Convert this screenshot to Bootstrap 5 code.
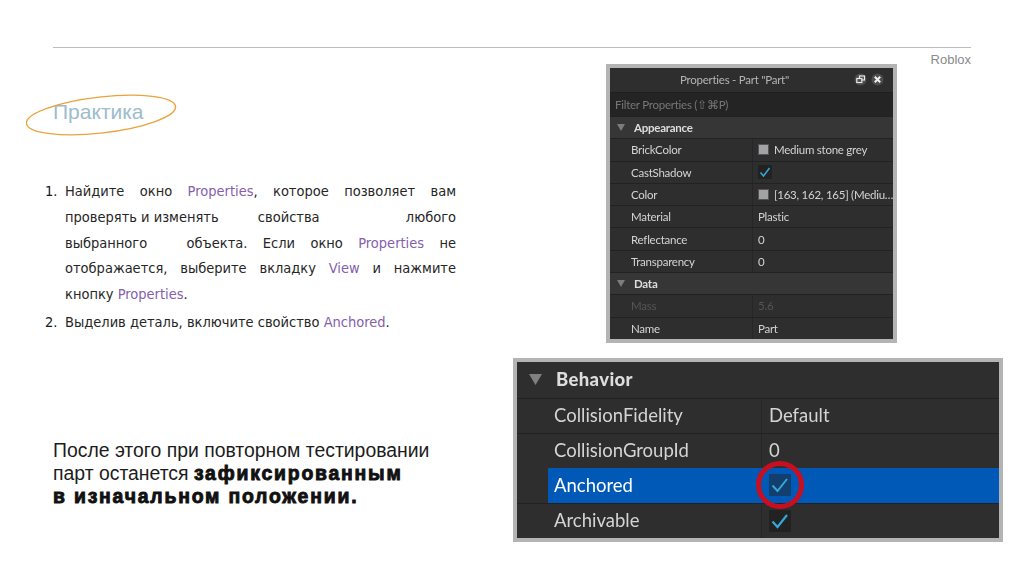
<!DOCTYPE html>
<html lang="ru">
<head>
<meta charset="utf-8">
<title>Практика</title>
<link href="https://cdn.jsdelivr.net/npm/bootstrap@5.3.0/dist/css/bootstrap.min.css" rel="stylesheet">
<style>
html,body{height:574px;overflow:hidden;background:#fff}
.slide{height:574px;padding-top:47px}
.rule{height:1px;background:#bdbdbd;margin:0 53px}
.leftcol{width:513px;flex:none}
.rightcol{width:490px;flex:none}
.heading-wrap{padding-left:53px;margin-top:38px;height:50px}
.practice{font:21px/1 "Liberation Sans",sans-serif;color:#9dbccc;padding-top:15px}
.ring{position:absolute;left:-27px;top:6px}
.steps{padding-left:45px;margin-top:43px;font:14.5px/25.8px "DejaVu Sans Condensed","DejaVu Sans",sans-serif;color:#262626;width:456px}
.stepnum{width:20px;flex:none;color:#1a1a1a}
.stepline{text-align:justify;text-align-last:justify;white-space:nowrap}
.stepline.free{text-align-last:left}
.hl{color:#8560ab}
.g2{margin-right:47px}
.g3{margin-right:24px}
.secondstep{margin-top:2px}
.after{font:19.4px/23px "Liberation Sans",sans-serif;color:#1c1c1c;padding-left:53px;margin-top:103px}
.heavy{font-weight:700;color:#111;letter-spacing:1.8px;-webkit-text-stroke:.9px #111}
.robloxtag{font:13px/1 "Liberation Sans",sans-serif;color:#8a8a8a;padding:5px 32px 0 0}
.toprow{padding-left:93px}
.panel{background:#2e2e2e;border:4px solid #b4b4b4;color:#d4d4d4;font-family:Lato,"Noto Sans",sans-serif;filter:blur(.35px)}
.smallp{width:291px;margin-top:16px;font-size:11.5px;letter-spacing:-.25px}
.smallp .titlebar{height:24px;background:#2e2e2e;color:#b5b5b5;position:relative;padding-right:34px}
.winbtns{position:absolute;right:4px;top:4px}
.filterbar{height:24px;background:#242424;color:#777;padding-left:5px;border-top:1px solid #1f1f1f}
.prow{height:22.3px;border-top:1px solid #222}
.prow .lbl{width:143px;padding-left:21px;flex:none;border-right:1px solid #262626;height:100%;display:flex;align-items:center}
.prow .val{padding-left:5px;display:flex;align-items:center;gap:5px;height:100%;white-space:nowrap}
.grouprow{background:#363636;font-weight:700;color:#ddd;padding-left:7px;gap:9px}
.mutedrow{color:#555}
.swatch{width:11px;height:11px;background:#a3a2a5;border:1px solid #555;flex:none}
.bigp{margin-top:15px;font-size:18.5px;height:184px}
.bigp .prow{height:35px}
.bigp .lbl{width:245px;padding-left:37px}
.bigp .val{padding-left:7px}
.bigp .grouprow{background:#2e2e2e;font-size:18.5px;font-weight:900;letter-spacing:.35px;padding-left:12px;gap:14px;height:36px;border-top:0}
.bigp .selrow{position:relative;border-top:0}
.selrow .lbl{color:#fff;border-right:0;padding-left:0;margin-left:31px;width:214px;background:#0058b7}
.selrow .val{background:#0058b7;flex:1}
.sellabel{padding-left:6px}
.cbox{display:block;flex:none}
.redring{position:absolute;left:239px;top:-7px}
</style>
</head>
<body>
<div class="slide">
  <div class="rule"></div>
  <div class="d-flex">
    <div class="leftcol">
      <div class="heading-wrap">
        <div class="practice position-relative d-inline-block">Практика
          <svg class="ring" width="152" height="46" viewBox="0 0 152 46"><ellipse cx="75" cy="23" rx="75" ry="18" transform="rotate(-6.5 75 23)" fill="none" stroke="#e8a33c" stroke-width="1.4"/></svg>
        </div>
      </div>
      <div class="steps">
        <div class="d-flex">
          <div class="stepnum">1.</div>
          <div class="flex-grow-1">
            <div class="stepline">Найдите окно <span class="hl">Properties</span>, которое позволяет вам</div>
            <div class="stepline"><span class="d-inline-block">проверять&nbsp;и&nbsp;изменять</span> <span class="d-inline-block g2">свойства</span> любого</div>
            <div class="stepline"><span class="d-inline-block g3">выбранного</span> объекта. Если окно <span class="hl">Properties</span> не</div>
            <div class="stepline">отображается, выберите вкладку <span class="hl">View</span> и нажмите</div>
            <div class="stepline free">кнопку <span class="hl">Properties</span>.</div>
          </div>
        </div>
        <div class="d-flex secondstep">
          <div class="stepnum">2.</div>
          <div class="stepline free">Выделив деталь, включите свойство <span class="hl">Anchored</span>.</div>
        </div>
      </div>
      <div class="after">После этого при повторном тестировании<br>парт останется <span class="heavy">зафиксированным</span><br><span class="heavy">в изначальном положении.</span></div>
    </div>
    <div class="rightcol">
      <div class="d-flex justify-content-between align-items-start toprow">
        <div class="panel smallp">
          <div class="titlebar d-flex align-items-center justify-content-center">Properties - Part "Part"
            <svg class="winbtns" width="36" height="15" viewBox="0 0 36 15"><circle cx="7.500" cy="7.500" r="6" fill="#4d4d4d"/><circle cx="24.500" cy="7.500" r="6" fill="#4d4d4d"/><rect x="6.500" y="4" width="5" height="4" fill="none" stroke="#e8e8e8" stroke-width="1.200"/><rect x="3.800" y="6.500" width="5" height="4" fill="#4d4d4d" stroke="#e8e8e8" stroke-width="1.200"/><path d="M21.800 4.800l5.400 5.400M27.200 4.800l-5.400 5.400" stroke="#f0f0f0" stroke-width="2"/></svg>
          </div>
          <div class="filterbar d-flex align-items-center">Filter Properties (⇧⌘P)</div>
          <div class="prow grouprow d-flex align-items-center"><svg width="8" height="7" viewBox="0 0 8 7"><path d="M0 0h8L4 7z" fill="#7d7d7d"/></svg>Appearance</div>
          <div class="prow d-flex"><div class="lbl">BrickColor</div><div class="val"><span class="swatch"></span>Medium stone grey</div></div>
          <div class="prow d-flex"><div class="lbl">CastShadow</div><div class="val"><svg class="cbox" width="14" height="14" viewBox="0 0 14 14"><rect width="14" height="14" fill="#222"/><path d="M2.500 7.500l3 3.500 6-8" fill="none" stroke="#35a7d8" stroke-width="1.500"/></svg></div></div>
          <div class="prow d-flex"><div class="lbl">Color</div><div class="val"><span class="swatch"></span>[163, 162, 165] (Mediu…</div></div>
          <div class="prow d-flex"><div class="lbl">Material</div><div class="val">Plastic</div></div>
          <div class="prow d-flex"><div class="lbl">Reflectance</div><div class="val">0</div></div>
          <div class="prow d-flex"><div class="lbl">Transparency</div><div class="val">0</div></div>
          <div class="prow grouprow d-flex align-items-center"><svg width="8" height="7" viewBox="0 0 8 7"><path d="M0 0h8L4 7z" fill="#7d7d7d"/></svg>Data</div>
          <div class="prow mutedrow d-flex"><div class="lbl">Mass</div><div class="val">5.6</div></div>
          <div class="prow d-flex"><div class="lbl">Name</div><div class="val">Part</div></div>
        </div>
        <div class="robloxtag">Roblox</div>
      </div>
      <div class="panel bigp">
        <div class="prow grouprow d-flex align-items-center"><svg width="13" height="11" viewBox="0 0 13 11"><path d="M0 0h13L6.500 11z" fill="#808080"/></svg>Behavior</div>
        <div class="prow d-flex"><div class="lbl">CollisionFidelity</div><div class="val">Default</div></div>
        <div class="prow d-flex"><div class="lbl">CollisionGroupId</div><div class="val">0</div></div>
        <div class="prow selrow d-flex"><div class="lbl"><span class="sellabel">Anchored</span></div><div class="val"><svg class="cbox" width="22" height="22" viewBox="0 0 22 22"><rect width="22" height="22" fill="#123f6d"/><path d="M3.500 11.500l5 5.500 9.500-12" fill="none" stroke="#35a7d8" stroke-width="2"/></svg></div>
          <svg class="redring" width="48" height="48" viewBox="0 0 48 48"><circle cx="24" cy="24" r="21.500" fill="none" stroke="#c70f1f" stroke-width="5"/></svg></div>
        <div class="prow d-flex"><div class="lbl">Archivable</div><div class="val"><svg class="cbox" width="22" height="22" viewBox="0 0 22 22"><rect width="22" height="22" fill="#222"/><path d="M3.500 11.500l5 5.500 9.500-12" fill="none" stroke="#35a7d8" stroke-width="2.200"/></svg></div></div>
      </div>
    </div>
  </div>
</div>
</body>
</html>
